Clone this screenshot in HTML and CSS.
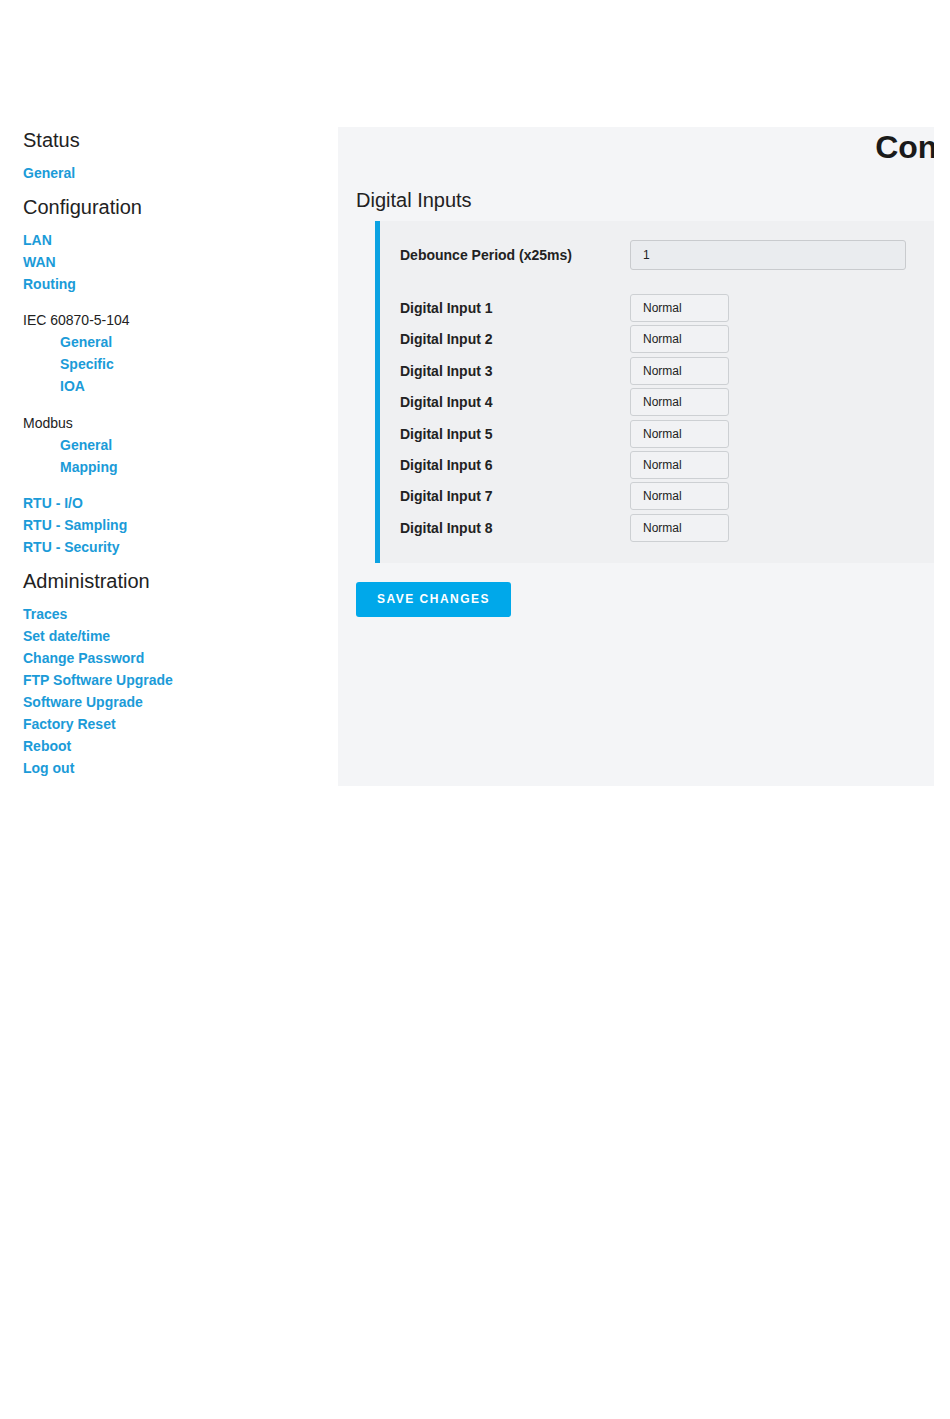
FILE: index.html
```html
<!DOCTYPE html>
<html lang="en">
<head>
    <meta charset="UTF-8">
    <meta name="viewport" content="width=device-width, initial-scale=1.0">
    <title>RTU - I/O</title>
    <link rel="stylesheet" href="styles.css">
</head>
<body>
    <div class="page">
        <div class="sidebar">
            <h3>Status</h3>
            <ul class="links">
                <li><a href="#">General</a></li>
            </ul>

            <h3>Configuration</h3>
            <ul class="links">
                <li><a href="#">LAN</a></li>
                <li><a href="#">WAN</a></li>
                <li><a href="#">Routing</a></li>
            </ul>

            <div class="group">
                <p class="group-name">IEC 60870-5-104</p>
                <ul class="links sub">
                    <li><a href="#">General</a></li>
                    <li><a href="#">Specific</a></li>
                    <li><a href="#">IOA</a></li>
                </ul>
            </div>

            <div class="group">
                <p class="group-name">Modbus</p>
                <ul class="links sub">
                    <li><a href="#">General</a></li>
                    <li><a href="#">Mapping</a></li>
                </ul>
            </div>

            <ul class="links">
                <li><a href="#">RTU - I/O</a></li>
                <li><a href="#">RTU - Sampling</a></li>
                <li><a href="#">RTU - Security</a></li>
            </ul>

            <h3>Administration</h3>
            <ul class="links last">
                <li><a href="#">Traces</a></li>
                <li><a href="#">Set date/time</a></li>
                <li><a href="#">Change Password</a></li>
                <li><a href="#">FTP Software Upgrade</a></li>
                <li><a href="#">Software Upgrade</a></li>
                <li><a href="#">Factory Reset</a></li>
                <li><a href="#">Reboot</a></li>
                <li><a href="#">Log out</a></li>
            </ul>
        </div>

        <div class="main">
            <div class="content">
                <h1>Configuration</h1>
                <h2>Digital Inputs</h2>

                <div class="box">
                    <div class="row debounce">
                        <label>Debounce Period (x25ms)</label>
                        <input class="text-input" type="text" value="1">
                    </div>

                    <div class="inputs">
                        <div class="row">
                            <label>Digital Input 1</label>
                            <select class="mode"><option>Normal</option><option>Inverted</option></select>
                        </div>
                        <div class="row">
                            <label>Digital Input 2</label>
                            <select class="mode"><option>Normal</option><option>Inverted</option></select>
                        </div>
                        <div class="row">
                            <label>Digital Input 3</label>
                            <select class="mode"><option>Normal</option><option>Inverted</option></select>
                        </div>
                        <div class="row">
                            <label>Digital Input 4</label>
                            <select class="mode"><option>Normal</option><option>Inverted</option></select>
                        </div>
                        <div class="row">
                            <label>Digital Input 5</label>
                            <select class="mode"><option>Normal</option><option>Inverted</option></select>
                        </div>
                        <div class="row">
                            <label>Digital Input 6</label>
                            <select class="mode"><option>Normal</option><option>Inverted</option></select>
                        </div>
                        <div class="row">
                            <label>Digital Input 7</label>
                            <select class="mode"><option>Normal</option><option>Inverted</option></select>
                        </div>
                        <div class="row">
                            <label>Digital Input 8</label>
                            <select class="mode"><option>Normal</option><option>Inverted</option></select>
                        </div>
                    </div>
                </div>

                <button class="save-button">Save changes</button>
            </div>
        </div>
    </div>
</body>
</html>
```

FILE: styles.css
```css
body {
    margin: 0;
    background-color: #fff;
    color: #222;
    font-family: "Liberation Sans", Arial, Helvetica, sans-serif;
}
.page {
    display: flex;
    align-items: stretch;
    padding-top: 127px;
}
.sidebar {
    width: 315px;
    flex-shrink: 0;
    padding: 2px 0 7px 23px;
}
h3 {
    font-size: 20px;
    font-weight: normal;
    line-height: 22px;
    margin: 0 0 11px 0;
    color: #222;
}
.links {
    list-style: none;
    margin: 0 0 12px 0;
    padding: 0;
}
.links li {
    line-height: 22px;
}
.links a {
    color: #1b9bd8;
    font-size: 14px;
    font-weight: bold;
    text-decoration: none;
}
.links.sub {
    padding-left: 37px;
    margin-bottom: 0;
}
.links.last {
    margin-bottom: 0;
}
.group {
    margin: 14px 0 15px 0;
}
.group + .links {
    margin-top: -1px;
}
.group-name {
    margin: 0;
    font-size: 14px;
    line-height: 22px;
    color: #222;
}
.main {
    width: 596px;
    flex-shrink: 0;
    overflow: hidden;
    background-color: #f4f5f7;
}
.content {
    width: 1266px;
    padding: 0 0 0 18px;
    box-sizing: border-box;
}
h1 {
    margin: 0;
    padding-top: 3px;
    font-size: 32px;
    line-height: 35px;
    font-weight: bold;
    color: #1a1a1a;
    text-align: center;
}
h2 {
    margin: 24px 0 10px 0;
    font-size: 20px;
    line-height: 22px;
    font-weight: normal;
    color: #222;
}
.box {
    margin-left: 19px;
    border-left: 5px solid #0ba2e2;
    background-color: #eff0f2;
    padding: 19px 0 21px 20px;
}
.row {
    display: flex;
    align-items: center;
}
.row label {
    width: 230px;
    font-size: 14px;
    font-weight: bold;
    color: #222;
}
.inputs {
    display: flex;
    flex-direction: column;
    gap: 3.4px;
    margin-top: 24px;
}
.text-input {
    width: 276px;
    height: 30px;
    box-sizing: border-box;
    border: 1px solid #c9cbce;
    border-radius: 3px;
    background-color: #eaecef;
    padding: 0 12px;
    font-family: "Liberation Sans", Arial, sans-serif;
    font-size: 12px;
    color: #222;
}
.mode {
    appearance: none;
    -webkit-appearance: none;
    width: 99px;
    height: 28px;
    box-sizing: border-box;
    border: 1px solid #cdd0d3;
    border-radius: 3px;
    background-color: #f1f2f4;
    padding: 0 12px;
    font-family: "Liberation Sans", Arial, sans-serif;
    font-size: 12px;
    color: #222;
}
.save-button {
    margin: 19px 0 0 0;
    width: 155px;
    height: 35px;
    border: none;
    border-radius: 3px;
    background-color: #00a8ea;
    color: #fff;
    font-family: "Liberation Sans", Arial, sans-serif;
    font-size: 12px;
    font-weight: bold;
    letter-spacing: 1.5px;
    text-transform: uppercase;
    cursor: pointer;
}
```
